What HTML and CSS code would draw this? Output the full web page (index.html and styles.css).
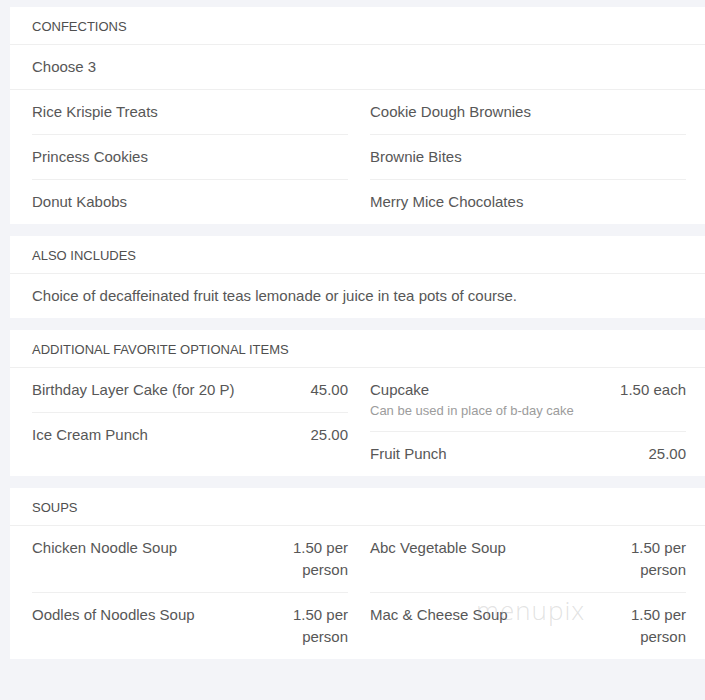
FILE: index.html
```html
<!DOCTYPE html>
<html>
<head>
<meta charset="utf-8">
<link rel="stylesheet" href="styles.css">
</head>
<body>
<div class="page">
  <section class="card">
    <div class="card-head">CONFECTIONS</div>
    <div class="intro">Choose 3</div>
    <div class="cols">
      <div class="col">
        <div class="item"><span class="name">Rice Krispie Treats</span></div>
        <div class="item"><span class="name">Princess Cookies</span></div>
        <div class="item"><span class="name">Donut Kabobs</span></div>
      </div>
      <div class="col">
        <div class="item"><span class="name">Cookie Dough Brownies</span></div>
        <div class="item"><span class="name">Brownie Bites</span></div>
        <div class="item"><span class="name">Merry Mice Chocolates</span></div>
      </div>
    </div>
  </section>

  <section class="card">
    <div class="card-head">ALSO INCLUDES</div>
    <div class="intro last">Choice of decaffeinated fruit teas lemonade or juice in tea pots of course.</div>
  </section>

  <section class="card">
    <div class="card-head">ADDITIONAL FAVORITE OPTIONAL ITEMS</div>
    <div class="cols">
      <div class="col">
        <div class="item"><span class="name">Birthday Layer Cake (for 20 P)</span><span class="price">45.00</span></div>
        <div class="item"><span class="name">Ice Cream Punch</span><span class="price">25.00</span></div>
      </div>
      <div class="col">
        <div class="item"><div class="name">Cupcake<div class="desc">Can be used in place of b-day cake</div></div><span class="price">1.50 each</span></div>
        <div class="item"><span class="name">Fruit Punch</span><span class="price">25.00</span></div>
      </div>
    </div>
  </section>

  <section class="card soups">
    <div class="card-head">SOUPS</div>
    <div class="cols">
      <div class="col">
        <div class="item"><span class="name">Chicken Noodle Soup</span><span class="price">1.50 per person</span></div>
        <div class="item"><span class="name">Oodles of Noodles Soup</span><span class="price">1.50 per person</span></div>
      </div>
      <div class="col">
        <div class="item"><span class="name">Abc Vegetable Soup</span><span class="price">1.50 per person</span></div>
        <div class="item"><span class="name">Mac &amp; Cheese Soup</span><span class="price">1.50 per person</span></div>
      </div>
    </div>
    <div class="watermark">menupix</div>
  </section>
</div>
</body>
</html>
```

FILE: styles.css
```css
html, body {
  margin: 0;
  padding: 0;
  background: #f3f4f8;
}
body {
  font-family: "Liberation Sans", Arial, sans-serif;
  color: #575757;
  font-size: 15px;
  line-height: 22px;
}
.page {
  padding: 7px 0 40px 10px;
  display: flex;
  flex-direction: column;
  gap: 12px;
}
.card {
  background: #ffffff;
  position: relative;
}
.card-head {
  height: 37px;
  line-height: 40px;
  padding: 0 22px;
  font-size: 13px;
  color: #4f4f4f;
  border-bottom: 1px solid #efefef;
}
.intro {
  padding: 11px 22px;
  border-bottom: 1px solid #efefef;
}
.intro.last {
  border-bottom: none;
}
.cols {
  display: flex;
  gap: 22px;
  padding: 0 19px 0 22px;
  align-items: flex-start;
}
.col {
  flex: 1;
  display: flex;
  flex-direction: column;
}
.item {
  display: flex;
  justify-content: space-between;
  align-items: flex-start;
  gap: 12px;
  padding: 11px 0;
  border-bottom: 1px solid #efefef;
}
.item:last-child {
  border-bottom: none;
}
.price {
  max-width: 70px;
  text-align: right;
  flex-shrink: 0;
}
.desc {
  font-size: 13px;
  line-height: 19px;
  color: #9c9c9c;
}
.watermark {
  position: absolute;
  left: 466px;
  top: 111px;
  font-family: "Open Sans", sans-serif;
  font-size: 26px;
  font-weight: 300;
  letter-spacing: 1px;
  color: rgba(160, 160, 160, 0.3);
  pointer-events: none;
}
```
